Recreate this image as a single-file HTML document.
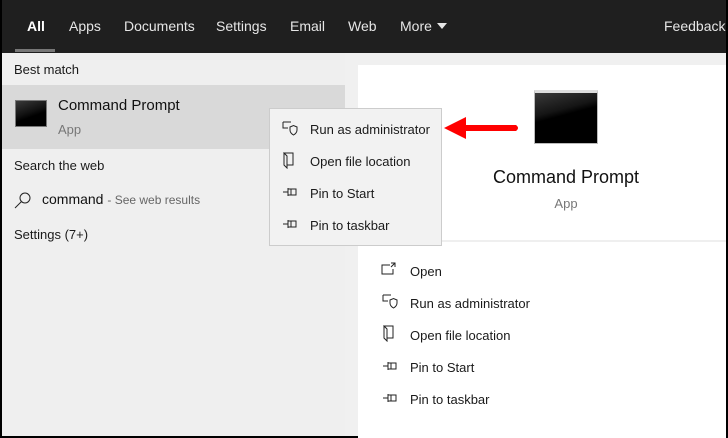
<!DOCTYPE html><html><head><style>
body{margin:0;width:728px;height:438px;overflow:hidden;background:#000;font-family:"Liberation Sans",sans-serif;position:relative}
div,span,svg{position:absolute}
.hdr{left:2px;top:0;width:724px;height:53px;background:#1f1f1f}
.t{color:#e6e6e6;font-size:14px;top:18px}
.lp{left:2px;top:53px;width:343px;height:383px;background:#efefef}
.strip{left:345px;top:53px;width:381px;height:383px;background:#f0f0f0}
.rp{left:358px;top:65px;width:368px;height:373px;background:#fff}
.k{font-size:13px;color:#1a1a1a}
.ic{stroke:#222;fill:none;stroke-width:1}
</style></head><body>
<div class="hdr"></div>
<div class="t" style="left:27px;font-weight:bold;color:#fff">All</div>
<div style="left:15px;top:49px;width:40px;height:3px;background:#777"></div>
<div class="t" style="left:69px">Apps</div>
<div class="t" style="left:124px">Documents</div>
<div class="t" style="left:216px">Settings</div>
<div class="t" style="left:290px">Email</div>
<div class="t" style="left:348px">Web</div>
<div class="t" style="left:400px">More</div>
<svg style="left:437px;top:23px" width="11" height="7"><path d="M0 0H10L5 6Z" fill="#e6e6e6"/></svg>
<div class="t" style="left:664px">Feedback</div>
<div class="lp"></div>
<div class="strip"></div>
<div class="rp"></div>
<div style="left:358px;top:240px;width:368px;height:2px;background:#efefef"></div>
<div class="k" style="left:14px;top:62px">Best match</div>
<div style="left:2px;top:85px;width:343px;height:64px;background:#d9d9d9"></div>
<div style="left:15px;top:100px;width:30px;height:25px;background:linear-gradient(160deg,#3a3a3a 0%,#111 45%,#000 60%);border:1px solid #777"></div>
<div style="left:58px;top:97px;font-size:15px;color:#111">Command Prompt</div>
<div style="left:58px;top:122px;font-size:13px;color:#777">App</div>
<div class="k" style="left:14px;top:158px">Search the web</div>
<svg style="left:14px;top:191px" width="18" height="18"><circle class="ic" cx="11" cy="7" r="5"/><path class="ic" d="M7.5 10.5L1 17"/></svg>
<div style="left:42px;top:191px;font-size:14px;color:#111">command <span style="position:static;font-size:12px;color:#666">- See web results</span></div>
<div class="k" style="left:14px;top:227px">Settings (7+)</div>
<div style="left:269px;top:108px;width:171px;height:136px;background:#f2f2f2;border:1px solid #ccc"></div>
<svg style="left:282px;top:121px" width="16" height="16"><path class="ic" d="M1 1H9M1 1V7H6M8 6L11.5 4.5L15 6V9Q15 12 11.5 14Q8 12 8 9Z"/></svg>
<div class="k" style="left:310px;top:122px">Run as administrator</div>
<svg style="left:283px;top:152px" width="14" height="17"><path class="ic" d="M1 1V13L4 16V4L1 1H10V13H4"/></svg>
<div class="k" style="left:310px;top:154px">Open file location</div>
<svg style="left:282px;top:186px" width="16" height="12"><path class="ic" d="M1 6H6M6 2V10M6 3H14V9H6M9 3V9"/></svg>
<div class="k" style="left:310px;top:186px">Pin to Start</div>
<svg style="left:282px;top:218px" width="16" height="12"><path class="ic" d="M1 6H6M6 2V10M6 3H14V9H6M9 3V9"/></svg>
<div class="k" style="left:310px;top:218px">Pin to taskbar</div>
<svg style="left:440px;top:114px" width="82" height="30"><path d="M4 14L26 3V11H76Q80 14 76 17H26V25Z" fill="#f00"/></svg>
<div style="left:534px;top:90px;width:62px;height:50px;background:linear-gradient(165deg,#3a3a3a 0%,#151515 35%,#000 45%);border:1px solid #bbb;border-top:3px solid #ddd"></div>
<div style="left:382px;top:167px;width:368px;text-align:center;font-size:18px;color:#111">Command Prompt</div>
<div style="left:382px;top:196px;width:368px;text-align:center;font-size:13px;color:#777">App</div>
<svg style="left:381px;top:262px" width="16" height="14"><path class="ic" d="M9 3H1V12H12V7M10 1H14V5M14 1L10 5"/></svg>
<div class="k" style="left:410px;top:264px">Open</div>
<svg style="left:382px;top:294px" width="16" height="16"><path class="ic" d="M1 1H9M1 1V7H6M8 6L11.5 4.5L15 6V9Q15 12 11.5 14Q8 12 8 9Z"/></svg>
<div class="k" style="left:410px;top:296px">Run as administrator</div>
<svg style="left:383px;top:325px" width="14" height="17"><path class="ic" d="M1 1V13L4 16V4L1 1H10V13H4"/></svg>
<div class="k" style="left:410px;top:328px">Open file location</div>
<svg style="left:382px;top:360px" width="16" height="12"><path class="ic" d="M1 6H6M6 2V10M6 3H14V9H6M9 3V9"/></svg>
<div class="k" style="left:410px;top:360px">Pin to Start</div>
<svg style="left:382px;top:392px" width="16" height="12"><path class="ic" d="M1 6H6M6 2V10M6 3H14V9H6M9 3V9"/></svg>
<div class="k" style="left:410px;top:392px">Pin to taskbar</div>
</body></html>
